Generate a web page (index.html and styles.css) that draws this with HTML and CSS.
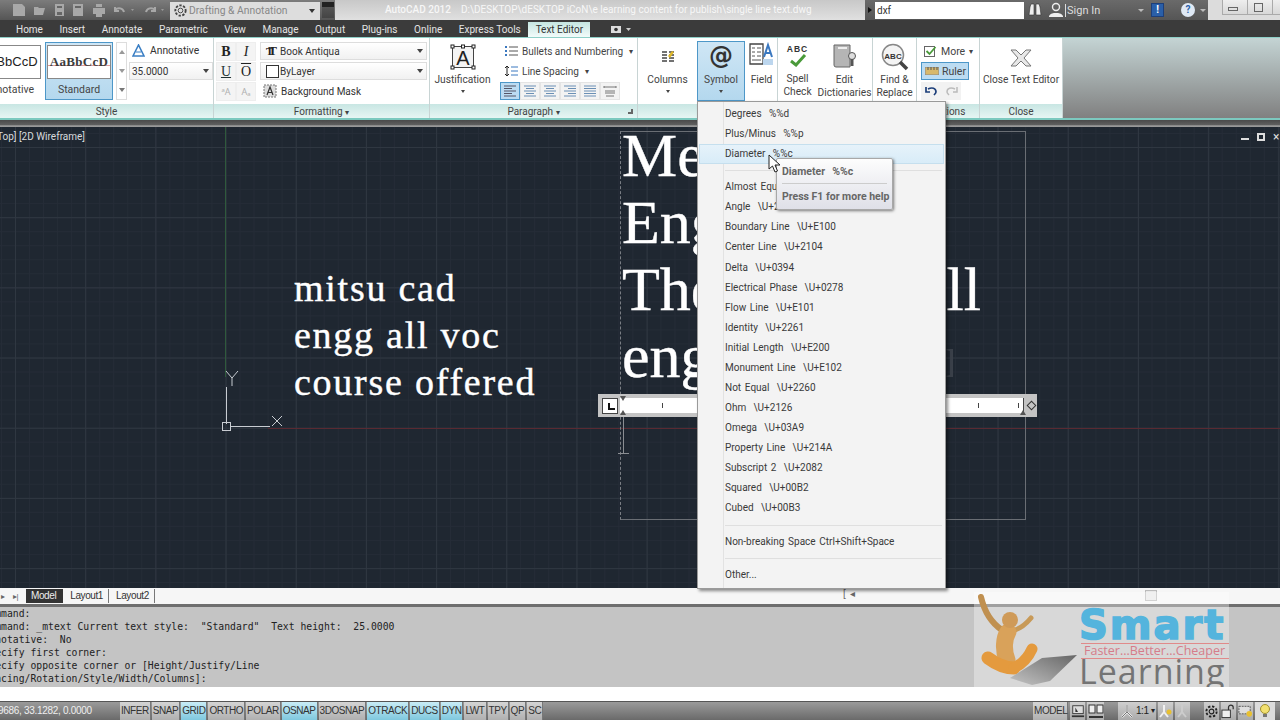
FILE: index.html
```html
<!DOCTYPE html>
<html lang="en">
<head>
<meta charset="utf-8">
<title>AutoCAD 2012</title>
<link rel="stylesheet" href="styles.css">
</head>
<body>
<div class="app">
  <header class="titlebar">
    <div class="tb-left">
      <svg class="qa" width="170" height="20" viewBox="0 0 170 20"><g fill="#a8a8a8"><path d="M13 4h9l3 3v9H13z"/><path d="M34 7h4l1 1h6l-2 7H34z"/><path d="M55 4h9v12h-9z"/><path d="M73 4h10v12H73z"/><path d="M93 8h12v6H93zM96 4h6v3h-6zM96 14h6v3h-6z"/></g><path d="M57 6h5v2h-5zM57 12h5v3h-5zM75 6h6v2h-6z" fill="#666"/><path d="M124 12c-1-4-6-5-9-2M115 7v4h4M146 12c1-4 6-5 9-2M155 7v4h-4" fill="none" stroke="#a8a8a8" stroke-width="2"/><path d="M131 9l3 0-1.500 2zM161 9l3 0-1.500 2z" fill="#999"/></svg>
      <div class="workspace">
        <svg width="15" height="15" viewBox="0 0 16 16"><g fill="none" stroke="#444"><circle cx="8" cy="8" r="2.500"/><circle cx="8" cy="8" r="5.500" stroke-dasharray="2.500 1.500" stroke-width="2"/></g></svg>
        <span class="ws-name">Drafting &amp; Annotation</span>
        <span class="ws-arrow"></span>
      </div>
      <span class="ws-btn"></span>
    </div>
    <div class="tb-title"><span class="app-name">AutoCAD 2012</span><span>D:\DESKTOP\dESKTOP iCoN\e learning content for publish\single line text.dwg</span></div>
    <div class="tb-search">
      <span class="play"></span>
      <span class="search-input">dxf</span>
      <svg class="binoc" width="14" height="14" viewBox="0 0 14 14"><path d="M1 12l1-8 1-3h3v11zM8 12V1h3l1 3 1 8z" fill="#eee" stroke="#333" stroke-width=".6"/></svg>
      <svg class="user" width="16" height="16" viewBox="0 0 16 16"><circle cx="8" cy="5" r="3.500" fill="none" stroke="#eee" stroke-width="1.400"/><path d="M1 15v-1c2-3 4-3 7-3s5 0 7 3v1z" fill="#eee"/></svg>
      <span class="signin">Sign In</span>
      <span class="dd"></span>
      <span class="alert">!</span>
      <span class="help">?</span>
      <span class="dd small"></span>
    </div>
    <div class="tb-win"><span class="win-btn"><i class="min"></i></span><span class="win-btn"><i class="rest"></i></span><span class="win-btn last"></span></div>
  </header>

  <nav class="tabs">
    <span>Home</span><span>Insert</span><span>Annotate</span><span>Parametric</span><span>View</span><span>Manage</span><span>Output</span><span>Plug-ins</span><span>Online</span><span>Express Tools</span><span class="active">Text Editor</span>
    <svg class="cam" width="22" height="10" viewBox="0 0 22 10"><path d="M0 2h10v7H0z" fill="#ddd"/><circle cx="5" cy="5.500" r="1.800" fill="#333"/><path d="M15 4h5l-2.500 3z" fill="#ccc"/></svg>
  </nav>

  <section class="ribbon">
    <div class="panel p-style">
      <div class="panel-body style-body">
        <div class="style-card clipped"><div class="swatch sans">AaBbCcD</div><div class="card-label">Annotative</div></div>
        <div class="style-card selected"><div class="swatch serif">AaBbCcD</div><div class="card-label">Standard</div></div>
        <div class="scroller"><i class="up"></i><i class="down"></i><i class="more"></i></div>
        <div class="style-right">
          <div class="annot"><svg width="13" height="13" viewBox="0 0 13 13"><path d="M6.500 1L1 12h11z" fill="none" stroke="#3b7fc4" stroke-width="1.600"/><path d="M4 8h5" stroke="#3b7fc4"/></svg><span>Annotative</span></div>
          <div class="select s-size"><span>35.0000</span><b></b></div>
        </div>
      </div>
      <div class="panel-title">Style</div>
    </div>

    <div class="panel p-format">
      <div class="panel-body format-body">
        <div class="fmt-grid">
          <span class="fmt b">B</span><span class="fmt i">I</span>
          <span class="fmt u">U</span><span class="fmt o">O</span>
          <span class="fmt dim">ᵃA</span><span class="fmt dim">Aₐ</span>
        </div>
        <div class="fmt-right">
          <div class="select s-font"><span class="tt">T<em>T</em></span><span>Book Antiqua</span><b></b></div>
          <div class="select s-font"><i class="colorbox"></i><span>ByLayer</span><b></b></div>
          <div class="bgmask"><svg width="14" height="14" viewBox="0 0 14 14"><rect x="1" y="1" width="12" height="12" fill="#dcdcdc" stroke="#777" stroke-dasharray="2 1"/><path d="M4 11l3-8 3 8M5 8.500h4" fill="none" stroke="#333" stroke-width="1.200"/></svg><span>Background Mask</span></div>
        </div>
      </div>
      <div class="panel-title">Formatting <small>▾</small></div>
    </div>

    <div class="panel p-para">
      <div class="panel-body para-body">
        <div class="big just">
          <svg width="26" height="26" viewBox="0 0 26 26"><rect x="2.500" y="2.500" width="21" height="21" fill="#f4f4f4" stroke="#444"/><g fill="#fff" stroke="#222"><rect x="1" y="1" width="3" height="3"/><rect x="11.500" y="1" width="3" height="3"/><rect x="22" y="1" width="3" height="3"/><rect x="1" y="22" width="3" height="3"/><rect x="22" y="22" width="3" height="3"/></g><text x="13" y="21" class="svg-a">A</text></svg>
          <span class="big-label">Justification</span><span class="caret"></span>
        </div>
        <div class="para-right">
          <div class="para-row"><svg width="13" height="12" viewBox="0 0 13 12"><path d="M0 1h2v2H0zM0 5h2v2H0zM0 9h2v2H0z" fill="#3a78c0"/><path d="M4 2h9M4 6h9M4 10h9" stroke="#555"/></svg><span>Bullets and Numbering</span><small>▾</small></div>
          <div class="para-row"><svg width="13" height="12" viewBox="0 0 13 12"><path d="M2 1v10M0 3l2-2 2 2M0 9l2 2 2-2" fill="none" stroke="#222"/><path d="M6 2h7M6 6h7M6 10h7" stroke="#3a78c0"/></svg><span>Line Spacing</span><small>▾</small></div>
          <div class="align-row">
            <span class="al on"><svg width="14" height="12" viewBox="0 0 14 12"><path d="M1 1h12M1 3.500h8M1 6h12M1 8.500h8M1 11h12" stroke="#556"/></svg></span>
            <span class="al"><svg width="14" height="12" viewBox="0 0 14 12"><path d="M1 1h12M3 3.500h8M1 6h12M3 8.500h8M1 11h12" stroke="#6a8fb5"/></svg></span>
            <span class="al"><svg width="14" height="12" viewBox="0 0 14 12"><path d="M1 1h12M3 3.500h8M1 6h12M3 8.500h8M1 11h12" stroke="#6a8fb5"/></svg></span>
            <span class="al"><svg width="14" height="12" viewBox="0 0 14 12"><path d="M1 1h12M5 3.500h8M1 6h12M5 8.500h8M1 11h12" stroke="#6a8fb5"/></svg></span>
            <span class="al"><svg width="14" height="12" viewBox="0 0 14 12"><path d="M1 1h12M1 3.500h12M1 6h12M1 8.500h12M1 11h12" stroke="#6a8fb5"/></svg></span>
            <span class="al"><svg width="14" height="12" viewBox="0 0 14 12"><path d="M1 2h12M1 1v2M13 1v2M2 6h10M2 8h10M3 11h8" stroke="#777"/></svg></span>
          </div>
        </div>
      </div>
      <div class="panel-title para-title">Paragraph <small>▾</small><i class="launch"></i></div>
    </div>

    <div class="panel p-insert">
      <div class="panel-body insert-body">
        <div class="big b-columns"><svg width="14" height="14" viewBox="0 0 14 14"><path d="M1 2h5M1 5h5M1 8h5M1 11h5M8 2h5M8 5h5M8 8h5M8 11h5" stroke="#444" stroke-width="1.400"/><path d="M7 6l4-5 2 1-4 6z" fill="#e0b92a"/></svg><span class="big-label">Columns</span><span class="caret"></span></div>
        <div class="big b-symbol"><span class="at">@</span><span class="big-label">Symbol</span><span class="caret"></span></div>
        <div class="big b-field"><svg width="26" height="26" viewBox="0 0 26 26"><path d="M1 2h13v20H1z" fill="#fff" stroke="#444" stroke-width="1.300"/><path d="M3 6h3M8 6h4M3 10h3M8 10h4M3 14h3M8 14h4M3 18h9" stroke="#555"/><path d="M15 15l4-12 4 12M17 11h4" fill="none" stroke="#3a78c0" stroke-width="2"/><path d="M14 17h10v6H14z" fill="#bcd6ee"/></svg><span class="big-label">Field</span></div>
      </div>
      <div class="panel-title">&nbsp;</div>
    </div>

    <div class="panel p-spell">
      <div class="panel-body spell-body">
        <div class="big b-spell"><div class="abc">ABC</div><svg width="18" height="13" viewBox="0 0 18 13"><path d="M2 7l5 4 9-10" fill="none" stroke="#4a9a3a" stroke-width="3"/></svg><span class="big-label">Spell<br>Check</span></div>
        <div class="big b-dict"><svg width="28" height="27" viewBox="0 0 28 27"><path d="M3 2h16v22H5a2 2 0 0 1-2-2z" fill="#b5b5b5" stroke="#666"/><path d="M7 5h9" stroke="#eee" stroke-width="2"/><circle cx="21" cy="13" r="3.500" fill="#ddd" stroke="#555"/><path d="M21 16v7" stroke="#555" stroke-width="3"/></svg><span class="big-label">Edit<br>Dictionaries</span></div>
      </div>
      <div class="panel-title">&nbsp;</div>
    </div>

    <div class="panel p-find">
      <div class="panel-body"><div class="big b-find"><svg width="30" height="28" viewBox="0 0 30 28"><circle cx="13" cy="12" r="10.500" fill="#f4f4f4" stroke="#888" stroke-width="1.500"/><path d="M20 19l7 7" stroke="#444" stroke-width="3.500"/><text x="13" y="15.500" class="svg-abc">ABC</text></svg><span class="big-label">Find &amp;<br>Replace</span></div></div>
      <div class="panel-title">&nbsp;</div>
    </div>

    <div class="panel p-options">
      <div class="panel-body opt-body">
        <div class="opt-row"><svg width="13" height="12" viewBox="0 0 13 12"><rect x=".5" y="1.500" width="10" height="10" fill="#fff" stroke="#666"/><path d="M2.500 6l3 3 6-7" fill="none" stroke="#4a9a3a" stroke-width="1.800"/></svg><span>More</span><small>▾</small></div>
        <div class="opt-row ruler-btn"><svg width="14" height="8" viewBox="0 0 14 8"><rect width="14" height="8" fill="#d8b86a" stroke="#888"/><path d="M3 0v3M6 0v3M9 0v3M12 0v3" stroke="#555"/></svg><span>Ruler</span></div>
        <div class="undo-row"><span class="ur"><svg width="13" height="10" viewBox="0 0 13 10"><path d="M3 3c4-2 8-1 8 3 0 1-1 2-2 3M1 1v5h4" fill="none" stroke="#1d3f7a" stroke-width="1.700"/></svg></span><span class="ur"><svg width="13" height="10" viewBox="0 0 13 10"><path d="M10 3C6 1 2 2 2 6c0 1 1 2 2 3M12 1v5H8" fill="none" stroke="#bbb" stroke-width="1.500"/></svg></span></div>
      </div>
      <div class="panel-title">Options</div>
    </div>

    <div class="panel p-close">
      <div class="panel-body"><div class="big b-close"><svg width="22" height="18" viewBox="0 0 22 18"><path d="M1 1h5l5 5 5-5h5l-7 8 7 8h-5l-5-5-5 5H1l7-8z" fill="#e8e8e8" stroke="#777"/></svg><span class="big-label">Close Text Editor</span></div></div>
      <div class="panel-title">Close</div>
    </div>
    <div class="ribbon-fill"></div>
  </section>
  <div class="ribbon-gap"></div>

  <main class="viewport">
    <div class="vp-label">Top] [2D Wireframe]</div>
    <div class="vp-ctrl"><i class="v-min"></i><i class="v-rest"></i><i class="v-x">×</i></div>
    <div class="axis-y"></div><div class="axis-x"></div>
    <div class="note"><div>mitsu cad</div><div>engg all voc</div><div>course offered</div></div>
    <div class="textbox">
      <div class="bigline first">Mech</div>
      <div class="bigline">Engg</div>
      <div class="bigline split"><span>The</span><span>all</span></div>
      <div class="bigline split"><span>engg</span><span class="faint">n</span></div>
    </div>
    <div class="ruler">
      <span class="ruler-l"></span>
      <div class="ruler-track"><i class="t1"></i><i class="t2"></i><i class="t3"></i><i class="tri top"></i><i class="tri bot"></i><i class="tri end"></i></div>
      <span class="ruler-d"></span>
    </div>
    <div class="ibeam"></div>
    <svg class="ucs" width="66" height="66" viewBox="0 0 66 66"><g fill="none" stroke="#c8ccd2"><path d="M9.500 17v37M13 56.500h40"/><rect x="5.500" y="52.500" width="8" height="8"/><path d="M55 46l10 10M65 46L55 56M9 1l6 7 6-7M15 8v8" stroke-width="1"/></g></svg>
  </main>

  <div class="layoutbar">
    <span class="nav">▸</span><span class="nav">▸|</span>
    <span class="ltab model">Model</span><span class="ltab">Layout1</span><span class="ltab">Layout2</span>
    <span class="hbar"><i class="h1">[</i><i class="h2">◂</i></span>
    <i class="thumb"></i>
  </div>
  <div class="command">
    <pre class="cmd">Command:
Command: _mtext Current text style:  "Standard"  Text height:  25.0000
Annotative:  No
Specify first corner:
Specify opposite corner or [Height/Justify/Line
Spacing/Rotation/Style/Width/Columns]:</pre>
  </div>
  <div class="blank"></div>
  <footer class="status">
    <span class="coords">9686, 33.1282, 0.0000</span>
    <span class="tog">INFER</span><span class="tog">SNAP</span><span class="tog on">GRID</span><span class="tog">ORTHO</span><span class="tog">POLAR</span><span class="tog on">OSNAP</span><span class="tog">3DOSNAP</span><span class="tog on">OTRACK</span><span class="tog on">DUCS</span><span class="tog on">DYN</span><span class="tog">LWT</span><span class="tog">TPY</span><span class="tog">QP</span><span class="tog">SC</span>
    <span class="st-right">
      <span class="tog model-t">MODEL</span>
      <span class="ico w16"><svg width="14" height="16" viewBox="0 0 16 16"><rect x="2" y="2" width="12" height="9" fill="#ddd" stroke="#333"/><path d="M5 4v5h3z" fill="#333"/><path d="M1 14h14" stroke="#333" stroke-width="2"/></svg></span>
      <span class="ico w17"><svg width="16" height="16" viewBox="0 0 16 16"><rect x="1" y="2" width="6" height="8" fill="#eee" stroke="#333"/><rect x="9" y="2" width="6" height="8" fill="#eee" stroke="#333"/><path d="M1 14h14" stroke="#333" stroke-width="2"/></svg></span>
      <span class="gap"></span>
      <span class="ico scale"><svg width="14" height="14" viewBox="0 0 14 14"><path d="M7 1v7M7 8l-5 5M7 8l5 5" fill="none" stroke="#eee" stroke-width="2"/><path d="M7 1v7M7 8l-5 5M7 8l5 5" fill="none" stroke="#444" stroke-width=".7"/></svg><span>1:1</span><small>▾</small></span>
      <span class="ico w16"><svg width="15" height="15" viewBox="0 0 15 15"><path d="M6 1v7M6 8l-4 5M6 8l4 5" fill="none" stroke="#f0f0f0" stroke-width="2"/><circle cx="11" cy="8" r="2.500" fill="#e8c030"/></svg></span>
      <span class="ico w16"><svg width="15" height="15" viewBox="0 0 15 15"><path d="M7 1v7M7 8l-4 5M7 8l4 5" fill="none" stroke="#ccc" stroke-width="2"/></svg></span>
      <span class="gap"></span>
      <span class="ico w16"><svg width="17" height="17" viewBox="0 0 16 16"><circle cx="8" cy="8" r="2.500" fill="none" stroke="#222" stroke-width="1.200"/><circle cx="8" cy="8" r="5.500" fill="none" stroke="#222" stroke-width="2" stroke-dasharray="2.500 1.800"/></svg></span>
      <span class="ico w16"><svg width="16" height="16" viewBox="0 0 16 16"><rect x="1" y="7" width="9" height="8" fill="#eee" stroke="#333"/><path d="M8 7V4c0-3 5-3 5 0v2" fill="none" stroke="#333" stroke-width="1.300"/></svg></span>
      <span class="ico w16"><svg width="16" height="16" viewBox="0 0 16 16"><rect x="1" y="3" width="12" height="8" fill="#ddd" stroke="#555" stroke-dasharray="2 1"/><circle cx="12" cy="11" r="3" fill="#e8c030"/></svg></span>
      <span class="ico lamp"><svg width="14" height="16" viewBox="0 0 14 16"><circle cx="7" cy="6" r="4.500" fill="#f2e070" stroke="#a09030"/><path d="M5 11h4v3H5z" fill="#777"/></svg></span>
    </span>
  </footer>

  <div class="menu">
    <ul class="menu-list">
      <li>Degrees  %%d</li>
      <li>Plus/Minus  %%p</li>
      <li class="hot">Diameter  %%c</li>
      <li class="sep s1"></li>
      <li>Almost Equal  \U+2248</li>
      <li>Angle  \U+2220</li>
      <li>Boundary Line  \U+E100</li>
      <li>Center Line  \U+2104</li>
      <li>Delta  \U+0394</li>
      <li>Electrical Phase  \U+0278</li>
      <li>Flow Line  \U+E101</li>
      <li>Identity  \U+2261</li>
      <li>Initial Length  \U+E200</li>
      <li>Monument Line  \U+E102</li>
      <li>Not Equal  \U+2260</li>
      <li>Ohm  \U+2126</li>
      <li>Omega  \U+03A9</li>
      <li>Property Line  \U+214A</li>
      <li>Subscript 2  \U+2082</li>
      <li>Squared  \U+00B2</li>
      <li>Cubed  \U+00B3</li>
      <li class="sep s2"></li>
      <li>Non-breaking Space Ctrl+Shift+Space</li>
      <li class="sep s3"></li>
      <li>Other...</li>
    </ul>
  </div>
  <div class="tooltip"><div class="tip-head">Diameter  %%c</div><div class="tip-foot">Press F1 for more help</div></div>
  <svg class="cursor" width="13" height="19" viewBox="0 0 13 19"><path d="M1 1v14l3.500-3 2.500 6 2.500-1-2.500-6h5z" fill="#fff" stroke="#222"/></svg>

  <div class="logo">
    <svg class="logo-art" width="107" height="95" viewBox="0 0 107 95"><defs><linearGradient id="lg" x1="0" y1="1" x2="1" y2="0"><stop offset="0" stop-color="#c4c4c4"/><stop offset="1" stop-color="#666"/></linearGradient></defs><g fill="none" stroke="#d9a25a" stroke-linecap="round"><path d="M7 5C10 18 16 30 28 38" stroke="#c09050" stroke-width="6"/><path d="M57 26C52 32 47 36 41 38" stroke="#c89a58" stroke-width="5"/><path d="M34 40C30 46 29 58 33 68" stroke-width="17"/><path d="M14 66C22 72 30 76 40 76" stroke="#e49a3e" stroke-width="13"/><path d="M58 57C54 66 48 72 40 76" stroke="#e49a3e" stroke-width="11"/></g><circle cx="36" cy="28" r="8" fill="#cf9a58"/><path d="M36 86L68 66L103 63L76 89L58 93Z" fill="url(#lg)"/></svg>
    <div class="logo-text">
      <div class="l-smart">Smart</div>
      <div class="l-tag">Faster...Better...Cheaper</div>
      <div class="l-learn">Learning</div>
    </div>
  </div>
</div>
</body>
</html>
```

FILE: styles.css
```css
* { box-sizing: border-box; }
html, body { margin: 0; padding: 0; }
body { font-family: Roboto, "Noto Sans", sans-serif; font-size: 10px; color: #333; }
i, em { font-style: normal; }
.app { position: relative; width: 1280px; height: 720px; overflow: hidden; display: flex; flex-direction: column; background: #fff; }

/* title bar */
.titlebar { flex: 0 0 20px; display: flex; height: 20px; background: #d9d9d9; }
.tb-left { flex: none; width: 335px; display: flex; align-items: center; background: linear-gradient(#7c7c7c, #555); position: relative; }
.qa { flex: 0 0 170px; width: 170px; }
.workspace { width: 150px; height: 18px; margin-top: 1px; background: #ddd; display: flex; align-items: center; gap: 1px; padding-left: 3px; color: #888; font-size: 10.300px; }
.ws-name { flex: 1; white-space: nowrap; }
.ws-arrow { border: 3px solid transparent; border-top: 4px solid #333; margin: 4px 5px 0 0; }
.ws-btn { width: 12px; height: 16px; margin-left: 2px; border-top: 5px solid #222; background: linear-gradient(#555, #444); }
.tb-title { flex: none; width: 530px; padding-left: 50px; color: #f7f7f7; white-space: nowrap; line-height: 20px; overflow: hidden; background: linear-gradient(#c8c8c8, #e0e0e0); }
.app-name { margin-right: 10px; font-weight: 500; }
.tb-search { flex: none; width: 343px; display: flex; align-items: center; background: linear-gradient(#6a6a6a, #555); color: #eee; padding-left: 3px; }
.play { flex: none; border: 3px solid transparent; border-left: 4px solid #111; margin-right: 0; }
.search-input { flex: none; width: 149px; height: 17px; background: #fff; color: #333; line-height: 17px; padding-left: 2px; margin: 0 4px 0 0; }
.binoc { flex: none; }
.user { margin: 0 1px 0 6px; flex: none; }
.signin { flex: none; width: 73px; color: #ddd; border-left: 1px solid #ddd; padding-left: 1px; line-height: 13px; font-size: 11px; }
.dd { flex: none; width: 6px; border: 3px solid transparent; border-top: 3px solid #bbb; margin: 4px 7px 0 0; }
.dd.small { margin: 4px 0 0 5px; }
.alert { flex: none; width: 13px; height: 14px; background: #2a5fa8; color: #fff; font-weight: 700; text-align: center; line-height: 12px; margin-right: 17px; border: 1px solid #1d3f7a; }
.help { flex: none; width: 14px; height: 14px; border-radius: 50%; background: #dfe9f5; color: #2a5fa8; font-weight: 700; text-align: center; line-height: 14px; }
.tb-win { flex: 1; display: flex; padding-left: 14px; background: #dcdcdc; }
.win-btn { width: 25px; height: 15px; border: 1px solid #aaa; border-top: 0; border-right: 0; background: linear-gradient(#eee, #d8d8d8); position: relative; }
.win-btn.last { flex: 1; }
.min { position: absolute; left: 5px; top: 7px; width: 10px; height: 4px; border: 1px solid #666; }
.rest { position: absolute; left: 6px; top: 3px; width: 9px; height: 9px; border: 1px solid #666; }

/* tabs */
.tabs { flex: 0 0 17px; height: 17px; display: flex; background: #3b3b3b; color: #e4e4e4; padding: 1px 0 0 16px; gap: 16.600px; align-items: center; white-space: nowrap; position: relative; }
.tabs .active { background: linear-gradient(#c5e6e1, #f2fbfa); color: #333; align-self: flex-end; height: 15px; line-height: 15px; margin: 0 -4px 0 -9px; width: 62px; text-align: center; }
.cam { margin-left: 8px; }

/* ribbon */
.ribbon { flex: 0 0 83px; height: 83px; display: flex; background: #fff; border-top: 1px solid #8fd0c8; border-bottom: 2px solid #7cc9bf; }
.panel { display: flex; flex-direction: column; border-right: 1px solid #c8d4d4; height: 80px; flex: none; }
.panel-body { flex: 0 0 66px; height: 66px; display: flex; }
.panel-title { flex: 0 0 14px; height: 14px; line-height: 15px; text-align: center; color: #444; background: linear-gradient(#c8e6e3, #e6f5f3); position: relative; }
.panel-title small { font-size: 8px; }
.p-style { width: 214px; }
.p-format { width: 216px; }
.p-para { width: 208px; }
.p-insert { width: 140px; }
.p-spell { width: 95px; }
.p-find { width: 44px; }
.p-options { width: 63px; }
.p-close { width: 83px; }
.ribbon-fill { flex: 1; height: 80px; background: linear-gradient(#c4d4d4, #808080); }
.ribbon-gap { flex: 0 0 7px; height: 7px; background: linear-gradient(#4a4a4a, #5f5f5f 70%, #aaa 85%, #888); }

.style-body { padding-top: 4px; }
.style-card { width: 68px; height: 58px; flex: none; display: flex; flex-direction: column; align-items: center; border: 1px solid transparent; padding-top: 2px; }
.clipped { margin-left: -25px; }
.selected { margin-left: 2px; background: linear-gradient(#cfe6f5, #b4d8ee); border-color: #4d97c8; }
.swatch { width: 64px; height: 34px; flex: none; background: #fff; border: 1px solid #888; text-align: center; line-height: 32px; white-space: nowrap; }
.swatch.sans { font-family: "Liberation Sans", sans-serif; font-size: 13px; color: #222; }
.swatch.serif { font-family: "Liberation Serif", serif; font-size: 13px; font-weight: 700; color: #3c3c3c; background: linear-gradient(#fff 60%, #e0a0a0 60%, #e0a0a0 63%, #fff 63%); letter-spacing: .3px; }
.card-label { line-height: 21px; color: #444; font-size: 10.500px; }
.scroller { width: 11px; height: 58px; margin-left: 3px; display: flex; flex-direction: column; border: 1px solid #ddd; flex: none; }
.scroller i { flex: 1; position: relative; display: flex; justify-content: center; align-items: center; }
.scroller i::after { content: ""; border: 3px solid transparent; }
.scroller .up::after { border-bottom: 4px solid #999; border-top: 0; }
.scroller .down::after { border-top: 4px solid #999; border-bottom: 0; }
.scroller .more::after { border-top: 4px solid #777; border-bottom: 0; }
.style-right { flex: 1; padding-left: 2px; width: 86px; min-width: 0; }
.annot { height: 18px; display: flex; align-items: center; gap: 5px; padding-left: 3px; margin-top: -1px; font-size: 10.300px; }
.select { display: flex; align-items: center; height: 18px; border: 1px solid #ddd; background: linear-gradient(#fff, #f1f1f1); position: relative; white-space: nowrap; }
.select b { position: absolute; right: 3px; top: 6px; border: 3px solid transparent; border-top: 4px solid #444; border-bottom: 0; }
.s-size { width: 84px; margin-top: 3px; padding-left: 2px; }

.format-body { padding: 4px 0 0 2px; }
.fmt-grid { width: 40px; display: grid; grid-template-columns: 20px 20px; grid-auto-rows: 20px; flex: none; }
.fmt { display: flex; align-items: center; justify-content: center; border: 1px solid #eee; background: #f4f4f4; font-family: "Liberation Serif", serif; font-size: 14px; color: #222; height: 19px; }
.fmt.b { font-weight: 700; }
.fmt.i { font-style: italic; }
.fmt.u { text-decoration: underline; color: #233; }
.fmt.o { text-decoration: overline; }
.fmt.dim { font-family: "Noto Sans", sans-serif; font-size: 9px; color: #b0b0b0; }
.fmt-right { width: 167px; margin-left: 4px; display: flex; flex-direction: column; gap: 2px; }
.s-font { padding-left: 5px; gap: 2px; }
.tt { font-family: "Liberation Serif", serif; font-weight: 700; font-size: 11px; width: 12px; color: #222; }
.tt em { margin-left: -5px; font-size: 13px; }
.colorbox { width: 13px; height: 13px; border: 1px solid #333; background: #fff; margin-right: -1px; }
.bgmask { height: 18px; display: flex; align-items: center; gap: 4px; padding-left: 3px; }

.big { display: flex; flex-direction: column; align-items: center; flex: none; position: relative; }
.big-label { line-height: 12.500px; text-align: center; color: #444; white-space: nowrap; font-size: 10.200px; }
.caret { border: 2px solid transparent; border-top: 3px solid #444; border-bottom: 0; margin-top: 3px; }
.just { width: 65px; padding-top: 6px; }
.just .big-label { margin-top: 4px; }
.svg-a { font: 20px "Liberation Sans", sans-serif; text-anchor: middle; fill: #222; }
.para-right { width: 140px; padding: 3px 0 0 5px; }
.para-row { height: 20px; display: flex; align-items: center; gap: 4px; padding-left: 5px; white-space: nowrap; color: #444; }
.para-row small { font-size: 8px; margin-left: 2px; }
.align-row { display: flex; margin-top: 1px; gap: 0; }
.al { width: 20px; height: 18px; display: flex; align-items: center; justify-content: center; background: #f3f3f3; border: 1px solid #e4e4e4; }
.al.on { background: #bcdcf2; border-color: #4d97c8; }
.para-title { color: #444; }
.launch { position: absolute; right: 4px; top: 5px; width: 5px; height: 5px; border-right: 2px solid #666; border-bottom: 2px solid #666; }

.b-columns { width: 59px; padding-top: 12px; }
.b-columns .big-label { margin-top: 10px; }
.b-symbol { width: 48px; height: 60px; margin-top: 3px; background: linear-gradient(#cfe6f5, #b4d8ee); border: 1px solid #4d97c8; }
.at { font: 700 24px/28px "DejaVu Sans", sans-serif; color: #333; margin-bottom: 4px; }
.b-field { width: 33px; padding-top: 4px; }
.b-field .big-label { margin-top: 6px; }
.insert-body { padding-left: 0; }
.b-spell { width: 39px; padding-top: 6px; }
.abc { font: 700 8.500px/10px "Liberation Sans", sans-serif; letter-spacing: 1px; color: #333; }
.b-spell svg { margin-bottom: 6px; }
.b-dict { width: 55px; padding-top: 5px; }
.b-dict .big-label { margin-top: 4px; }
.b-find { width: 43px; padding-top: 5px; }
.b-find .big-label { margin-top: 3px; }
.svg-abc { font: 700 8px "Liberation Sans", sans-serif; text-anchor: middle; fill: #333; }
.opt-body { flex-direction: column; padding: 4px 0 0 4px; }
.opt-row { height: 18px; display: flex; align-items: center; gap: 4px; padding-left: 3px; color: #444; white-space: nowrap; font-size: 10.500px; }
.opt-row small { font-size: 8px; }
.ruler-btn { width: 48px; background: #bcdcf2; border: 1px solid #4d97c8; gap: 3px; padding-left: 3px; margin-top: 2px; }
.undo-row { display: flex; margin-top: 2px; gap: 0; }
.ur { width: 20px; height: 18px; background: #f2f2f2; display: flex; align-items: center; justify-content: center; }
.b-close { width: 82px; padding-top: 11px; }
.b-close .big-label { margin-top: 7px; }

/* viewport */
.viewport { flex: 0 0 461px; height: 461px; position: relative; overflow: hidden; background-color: #1f2731;
  background-image:
    linear-gradient(90deg, #2f3741 1px, transparent 1px),
    linear-gradient(#2f3741 1px, transparent 1px),
    linear-gradient(90deg, #252c37 1px, transparent 1px),
    linear-gradient(#252c37 1px, transparent 1px);
  background-size: 70.200px 70.200px, 70.200px 70.200px, 14.040px 14.040px, 14.040px 14.040px;
  background-position: 15px 20px, 15px 20px, 1px 6px, 1px 6px; }
.vp-label { position: absolute; left: -3px; top: 4px; color: #d8dadd; white-space: nowrap; }
.vp-ctrl { position: absolute; right: 0; top: 6px; display: flex; gap: 8px; align-items: center; }
.vp-ctrl i { display: block; color: #ddd; }
.v-min { width: 8px; height: 2px; background: #ddd; margin-top: 3px; }
.v-rest { width: 8px; height: 8px; border: 2px solid #ddd; }
.v-x { width: 7px; font-size: 12px; line-height: 8px; }
.axis-y { position: absolute; left: 225px; top: 0; width: 1px; height: 250px; background: #2f5a3c; }
.axis-x { position: absolute; left: 268px; right: 0; top: 301px; height: 1px; background: #5a2a32; }
.note { position: absolute; left: 294px; top: 138px; color: #fff; font: 38px/47px "Liberation Serif", serif; letter-spacing: 1.750px; white-space: nowrap; -webkit-text-stroke: .4px #fff; }
.textbox { position: absolute; left: 620px; top: 4px; width: 406px; height: 389px; border: 1px solid #6a6e74; border-left: 1px dashed #7a7e84; padding: 0 44px 0 1px; color: #fff; font: 62px/67px "Liberation Serif", serif; -webkit-text-stroke: .4px #fff; }
.bigline { white-space: nowrap; }
.bigline.first { margin-top: -10px; }
.split { display: flex; justify-content: space-between; }
.faint { color: #3a4049; width: 8px; margin-right: 28px; overflow: hidden; -webkit-text-stroke: 0; }
.ruler { position: absolute; left: 598px; top: 267px; width: 439px; height: 23px; display: flex; align-items: center; background: #c4c4c4; padding: 0 1px 0 4px; }
.ruler-l { width: 16px; height: 16px; background: #fff; border: 1px solid #444; flex: none; position: relative; }
.ruler-l::after { content: ""; position: absolute; left: 5px; top: 4px; width: 5px; height: 5px; border-left: 2px solid #111; border-bottom: 2px solid #111; }
.ruler-track { flex: 1; height: 15px; margin-left: 2px; background: #fff; position: relative; border-right: 1px solid #444; }
.ruler-track i { position: absolute; }
.t1 { left: 42px; top: 5px; width: 1px; height: 5px; background: #444; }
.t2 { left: 358px; top: 5px; width: 1px; height: 5px; background: #444; }
.t3 { left: 398px; top: 5px; width: 1px; height: 5px; background: #444; }
.tri { width: 0; height: 0; border: 3px solid transparent; }
.tri.top { left: 0; top: -2px; border-top: 5px solid #555; border-bottom: 0; }
.tri.bot { left: 0; bottom: -2px; border-bottom: 5px solid #555; border-top: 0; }
.tri.end { right: -3px; bottom: -2px; border-bottom: 5px solid #555; border-top: 0; }
.ruler-d { width: 7px; height: 7px; margin: 0 1px 0 4px; border: 1px solid #333; transform: rotate(45deg); flex: none; }
.ibeam { position: absolute; left: 623px; top: 290px; width: 1px; height: 37px; background: #8a8d92; }
.ibeam::after { content: ""; position: absolute; left: -5px; bottom: 0; width: 11px; height: 1px; background: #8a8d92; }
.ucs { position: absolute; left: 217px; top: 243px; }

/* layout tabs */
.layoutbar { flex: 0 0 16px; height: 16px; display: flex; align-items: center; background: #f6f6f6; position: relative; font: 10px "Liberation Sans", sans-serif; letter-spacing: -.4px; }
.nav { width: 12px; font-size: 8px; color: #666; padding-left: 1px; }
.ltab { height: 14px; line-height: 14px; color: #333; margin-left: 0; padding: 0 5px 0 7px; border-right: 1px solid #777; }
.ltab.model { background: #333; color: #eee; margin-left: 2px; padding: 0 7px 0 5px; border: 0; }
.hbar { position: absolute; left: 843px; top: 0; color: #666; display: flex; gap: 5px; }
.thumb { position: absolute; left: 1145px; top: 2px; width: 12px; height: 11px; border: 1px solid #bbb; background: #e8e8e8; }

/* command */
.command { flex: 0 0 83px; height: 83px; background: #c4c4c4; border-top: 3px solid #6e6e6e; overflow: hidden; padding-top: 1px; }
.cmd { margin: 0 0 0 -16.500px; font: 9.750px/12.900px "DejaVu Sans Mono", monospace; color: #222; }
.blank { flex: 0 0 14px; height: 14px; background: #fff; }

/* status */
.status { flex: 0 0 19px; height: 19px; display: flex; align-items: stretch; background: linear-gradient(#9a9a9a, #6a6a6a); border-top: 1px solid #555; color: #222; font: 10px/18px "Liberation Sans", sans-serif; letter-spacing: -.45px; white-space: nowrap; }
.coords { width: 122px; color: #eee; margin-left: -2px; flex: none; letter-spacing: -.3px; }
.tog { padding: 0 1px; margin-right: 1px; background: linear-gradient(#d4d4d4, #b0b0b0); border-right: 1px solid #777; color: #333; text-align: center; }
.tog.on { background: linear-gradient(#c8ecf6, #7fc8de); }
.st-right { margin-left: auto; padding-right: 5px; display: flex; align-items: stretch; }
.model-t { width: 35px; margin-right: 2px; }
.ico { display: flex; align-items: center; justify-content: center; gap: 2px; background: linear-gradient(#cfcfcf, #aaa); margin-right: 2px; }
.w16 { width: 15px; }
.w17 { width: 17px; }
.gap { width: 12px; }
.scale { width: 38px; }
.scale small { font-size: 8px; }
.lamp { background: #dcdcdc; width: 20px; margin-right: 0; }

/* menu */
.menu { position: absolute; left: 697px; top: 101px; width: 249px; height: 488px; background: #f3f3f3; border: 1px solid #9a9a9a; box-shadow: 2px 2px 3px rgba(0,0,0,.45); padding-top: 2px; }
.menu::before { content: ""; position: absolute; left: 25px; top: 0; bottom: 0; width: 1px; background: #e2e2e2; }
.menu-list { list-style: none; margin: 0; padding: 0 1px; position: relative; }
.menu-list li { height: 20.080px; line-height: 20px; padding-left: 26px; white-space: pre; word-spacing: 1.200px; color: #3a3a3a; }
.menu-list .hot { background: linear-gradient(#e6f2fa, #d8ecf8); border: 1px solid #c5dfee; line-height: 18px; padding-left: 25px; }
.menu-list .sep { height: 13px; position: relative; }
.menu-list .sep::after { content: ""; position: absolute; left: 26px; right: 2px; top: 6px; height: 1px; background: #dfdfdf; }
.tooltip { position: absolute; left: 776px; top: 158px; width: 117px; height: 52px; background: linear-gradient(#fdfdfd, #dfe0e8); border: 1px solid #a8a8a8; border-radius: 2px; box-shadow: 1px 1px 3px rgba(0,0,0,.5); color: #666; font-weight: 700; font-size: 10.500px; padding: 0 5px; }
.tip-head { height: 25px; line-height: 25px; white-space: pre; border-bottom: 1px solid #ccc; word-spacing: 1px; }
.tip-foot { line-height: 25px; white-space: nowrap; }
.cursor { position: absolute; left: 768px; top: 154px; }

/* logo */
.logo { position: absolute; left: 974px; top: 592px; width: 255px; height: 95px; background: rgba(255,255,255,.35); display: flex; }
.logo-art { flex: none; }
.logo-text { flex: 1; overflow: hidden; display: flex; flex-direction: column; }
.l-smart { font: 700 40px/40px "DejaVu Sans", sans-serif; color: #54b4dd; height: 51px; padding-top: 13px; margin-left: -2px; letter-spacing: 2px; white-space: nowrap; -webkit-text-stroke: 1.600px #54b4dd; }
.l-tag { height: 16px; line-height: 14px; border-top: 1px solid #e08a8a; border-bottom: 1px solid #e08a8a; color: #d67c8a; font-family: "Open Sans", sans-serif; font-size: 12.500px; white-space: nowrap; padding-left: 3px; }
.l-learn { font: 34px/24px "Open Sans", sans-serif; color: #747474; white-space: nowrap; letter-spacing: 1px; margin-left: -2px; }
```
